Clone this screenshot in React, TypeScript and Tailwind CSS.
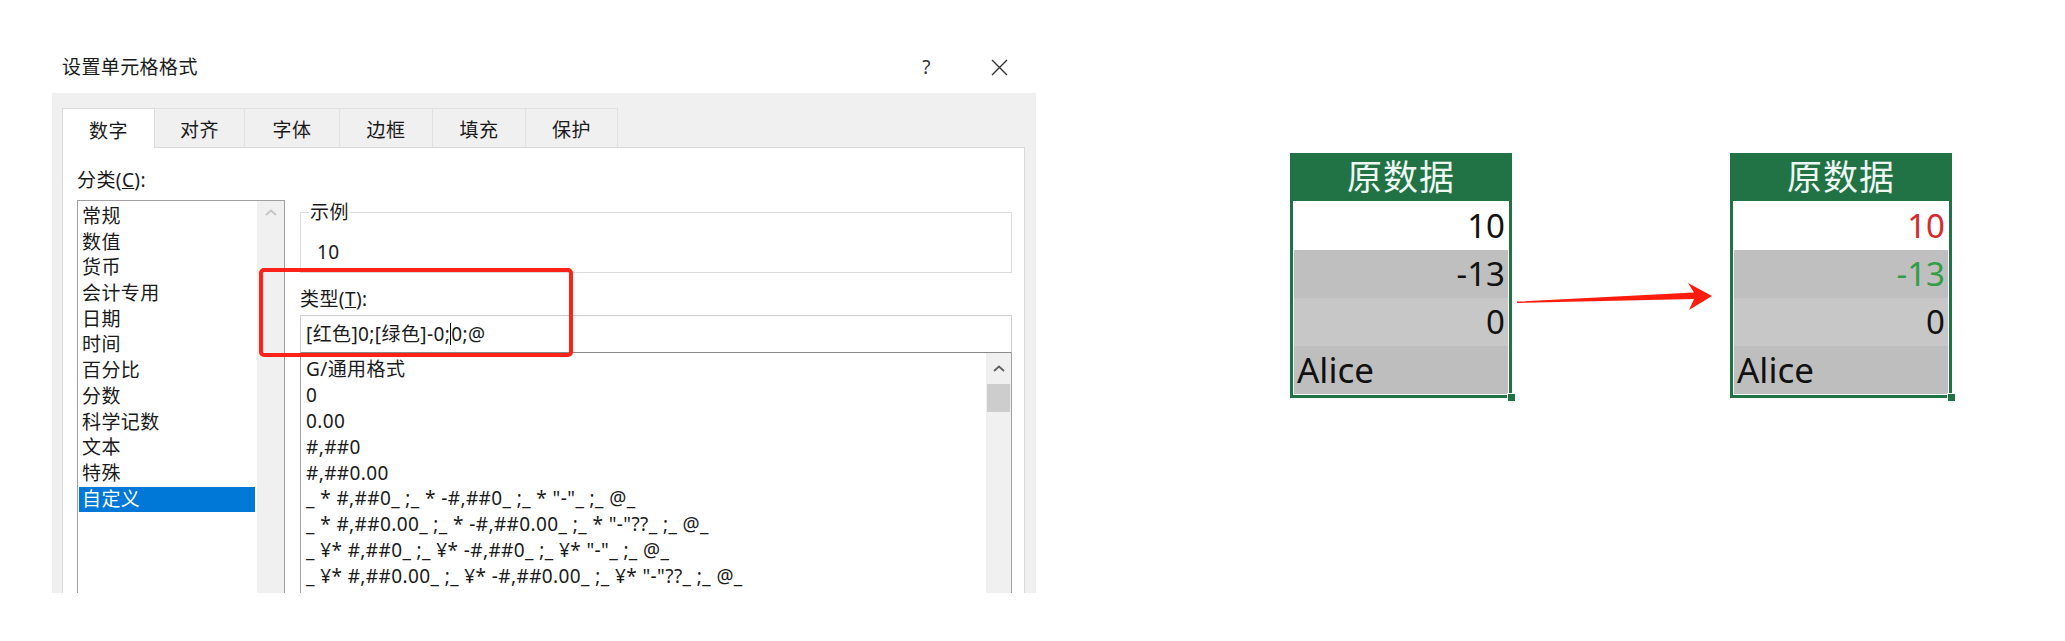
import React from 'react';

const categories = ['常规', '数值', '货币', '会计专用', '日期', '时间', '百分比', '分数', '科学记数', '文本', '特殊', '自定义'];

const formats = [
  'G/通用格式',
  '0',
  '0.00',
  '#,##0',
  '#,##0.00',
  '_ * #,##0_ ;_ * -#,##0_ ;_ * "-"_ ;_ @_',
  '_ * #,##0.00_ ;_ * -#,##0.00_ ;_ * "-"??_ ;_ @_',
  '_ ¥* #,##0_ ;_ ¥* -#,##0_ ;_ ¥* "-"_ ;_ @_',
  '_ ¥* #,##0.00_ ;_ ¥* -#,##0.00_ ;_ ¥* "-"??_ ;_ @_',
];

const tabs = [
  { label: '数字', w: 'w-[93px]' },
  { label: '对齐', w: 'w-[90px]' },
  { label: '字体', w: 'w-[95px]' },
  { label: '边框', w: 'w-[93px]' },
  { label: '填充', w: 'w-[93px]' },
  { label: '保护', w: 'w-[92px]' },
];

const ChevronUp: React.FC<{ color: string }> = ({ color }) => (
  <svg width="12" height="7" viewBox="0 0 12 7">
    <path d="M1 6 L6 1.5 L11 6" fill="none" stroke={color} strokeWidth="1.8" />
  </svg>
);

const FormatDialog: React.FC = () => (
  <div className="ml-[52px] w-[984px] flex flex-col text-[19px] tracking-[0.4px] text-[#1a1a1a]">
    {/* title bar */}
    <div className="h-[93px] flex items-start pt-[54px] pl-[10px] pr-[28px] leading-[26px]">
      <span>设置单元格格式</span>
      <div className="ml-auto flex items-center gap-[60px]">
        <span className="text-[#333]">?</span>
        <svg width="17" height="17" viewBox="0 0 17 17">
          <path d="M1 1 L16 16 M16 1 L1 16" stroke="#333" strokeWidth="1.4" />
        </svg>
      </div>
    </div>

    <div className="h-[500px] bg-[#f0f0f0] pt-[15px] pl-[10px] pr-[11px] overflow-hidden flex flex-col">
      {/* tabs */}
      <div className="flex h-[39px] shrink-0">
        {tabs.map((t, i) => (
          <div
            key={t.label}
            className={`${t.w} flex items-center justify-center pt-[4px] border border-b-0 leading-[26px] ${
              i === 0
                ? 'bg-white border-[#d9d9d9] relative z-10 h-[40px]'
                : 'bg-[#f0f0f0] border-[#e1e1e1] border-l-0'
            }`}
          >
            {t.label}
          </div>
        ))}
      </div>

      {/* panel */}
      <div className="h-[560px] shrink-0 bg-white border border-[#d9d9d9] flex pl-[14px] pr-[12px]">
        {/* category column */}
        <div className="w-[208px] pt-[19px] flex flex-col">
          <div className="leading-[26px]">
            分类(<span className="underline">C</span>):
          </div>
          <div className="mt-[7px] h-[420px] border border-[#a0a0a0] flex">
            <div className="flex-1 pt-[3px] pl-[1px] pr-[2px]">
              {categories.map((c) => (
                <div
                  key={c}
                  className={`h-[25.7px] leading-[25.7px] pl-[3px] ${
                    c === '自定义' ? 'bg-[#0078d7] text-white' : ''
                  }`}
                >
                  {c}
                </div>
              ))}
            </div>
            <div className="w-[27px] bg-[#f0f0f0] flex flex-col items-center pt-[8px]">
              <ChevronUp color="#c4c4c4" />
            </div>
          </div>
        </div>

        {/* right column */}
        <div className="ml-[15px] flex-1 relative">
          <fieldset className="mt-[51px] border border-[#dcdcdc]">
            <legend className="ml-[8px] px-[1px] leading-[26px]">示例</legend>
            <div className="pl-[16px] pt-[14px] pb-[7px] leading-[26px]">10</div>
          </fieldset>

          <div className="mt-[13px] leading-[26px]">
            类型(<span className="underline">T</span>):
          </div>
          <div className="mt-[3px] h-[38px] border border-[#cfcfcf] border-b-[#8a8a8a] flex items-center pl-[5px] leading-[26px]">
            <span>[红色]0;[绿色]-0;</span>
            <span className="inline-block w-[1px] h-[22px] bg-black" />
            <span>0;@</span>
          </div>

          <div className="h-[300px] border-x border-[#a0a0a0] flex">
            <div className="flex-1 pt-[4px] pl-[5px]">
              {formats.map((f) => (
                <div key={f} className="h-[25.9px] leading-[25.9px] whitespace-pre">
                  {f}
                </div>
              ))}
            </div>
            <div className="w-[25px] bg-[#f0f0f0] flex flex-col">
              <div className="h-[31px] flex items-center justify-center">
                <ChevronUp color="#606060" />
              </div>
              <div className="mx-[1px] h-[28px] bg-[#cdcdcd]" />
            </div>
          </div>

          {/* red highlight */}
          <div className="absolute left-[-41px] top-[120px] w-[314px] h-[89px] border-[4px] border-[#ff2218] rounded-[5px]" />
        </div>
      </div>
    </div>
  </div>
);

const rowBg = ['bg-white', 'bg-[#bfbfbf]', 'bg-[#c7c7c7]', 'bg-[#bebebe]'];

const DataColumn: React.FC<{ colored?: boolean }> = ({ colored }) => {
  const rows = [
    { v: '10', cls: 'text-right text-[33px]', color: colored ? 'text-[#d62b2b]' : 'text-[#111]' },
    { v: '-13', cls: 'text-right text-[33px]', color: colored ? 'text-[#2f9e44]' : 'text-[#111]' },
    { v: '0', cls: 'text-right text-[33px]', color: 'text-[#111]' },
    { v: 'Alice', cls: 'text-left text-[35px]', color: 'text-[#111]' },
  ];
  return (
    <div className="w-[222px] relative">
      <div className="h-[48px] bg-[#217346] flex items-center justify-center text-[35px] tracking-[1px] leading-[48px] text-[#eef7f1]">
        原数据
      </div>
      <div className="border-[3px] border-t-0 border-[#217346] p-[1px] bg-white">
        {rows.map((r, i) => (
          <div
            key={r.v}
            className={`h-[48px] leading-[48px] px-[3px] ${rowBg[i]} ${r.cls} ${r.color}`}
          >
            {r.v}
          </div>
        ))}
      </div>
      <div className="absolute right-[-4px] bottom-[-4px] w-[9px] h-[9px] bg-[#217346] border border-white" />
    </div>
  );
};

const Arrow: React.FC = () => (
  <svg width="218" height="50" viewBox="0 0 218 50" className="mt-[117px] shrink-0">
    <polygon
      points="5,31.6 182,22.5 176,13 200,26 177,40 182,29 5,33"
      fill="#ff1c0d"
    />
  </svg>
);

export default function App() {
  return (
    <div className="w-[2065px] h-[641px] bg-white flex overflow-hidden font-['Segoe_UI','Noto_Sans','Noto_Sans_CJK_SC',sans-serif]">
      <FormatDialog />
      <div className="ml-[254px] mt-[153px] flex items-start">
        <DataColumn />
        <Arrow />
        <DataColumn colored />
      </div>
    </div>
  );
}
